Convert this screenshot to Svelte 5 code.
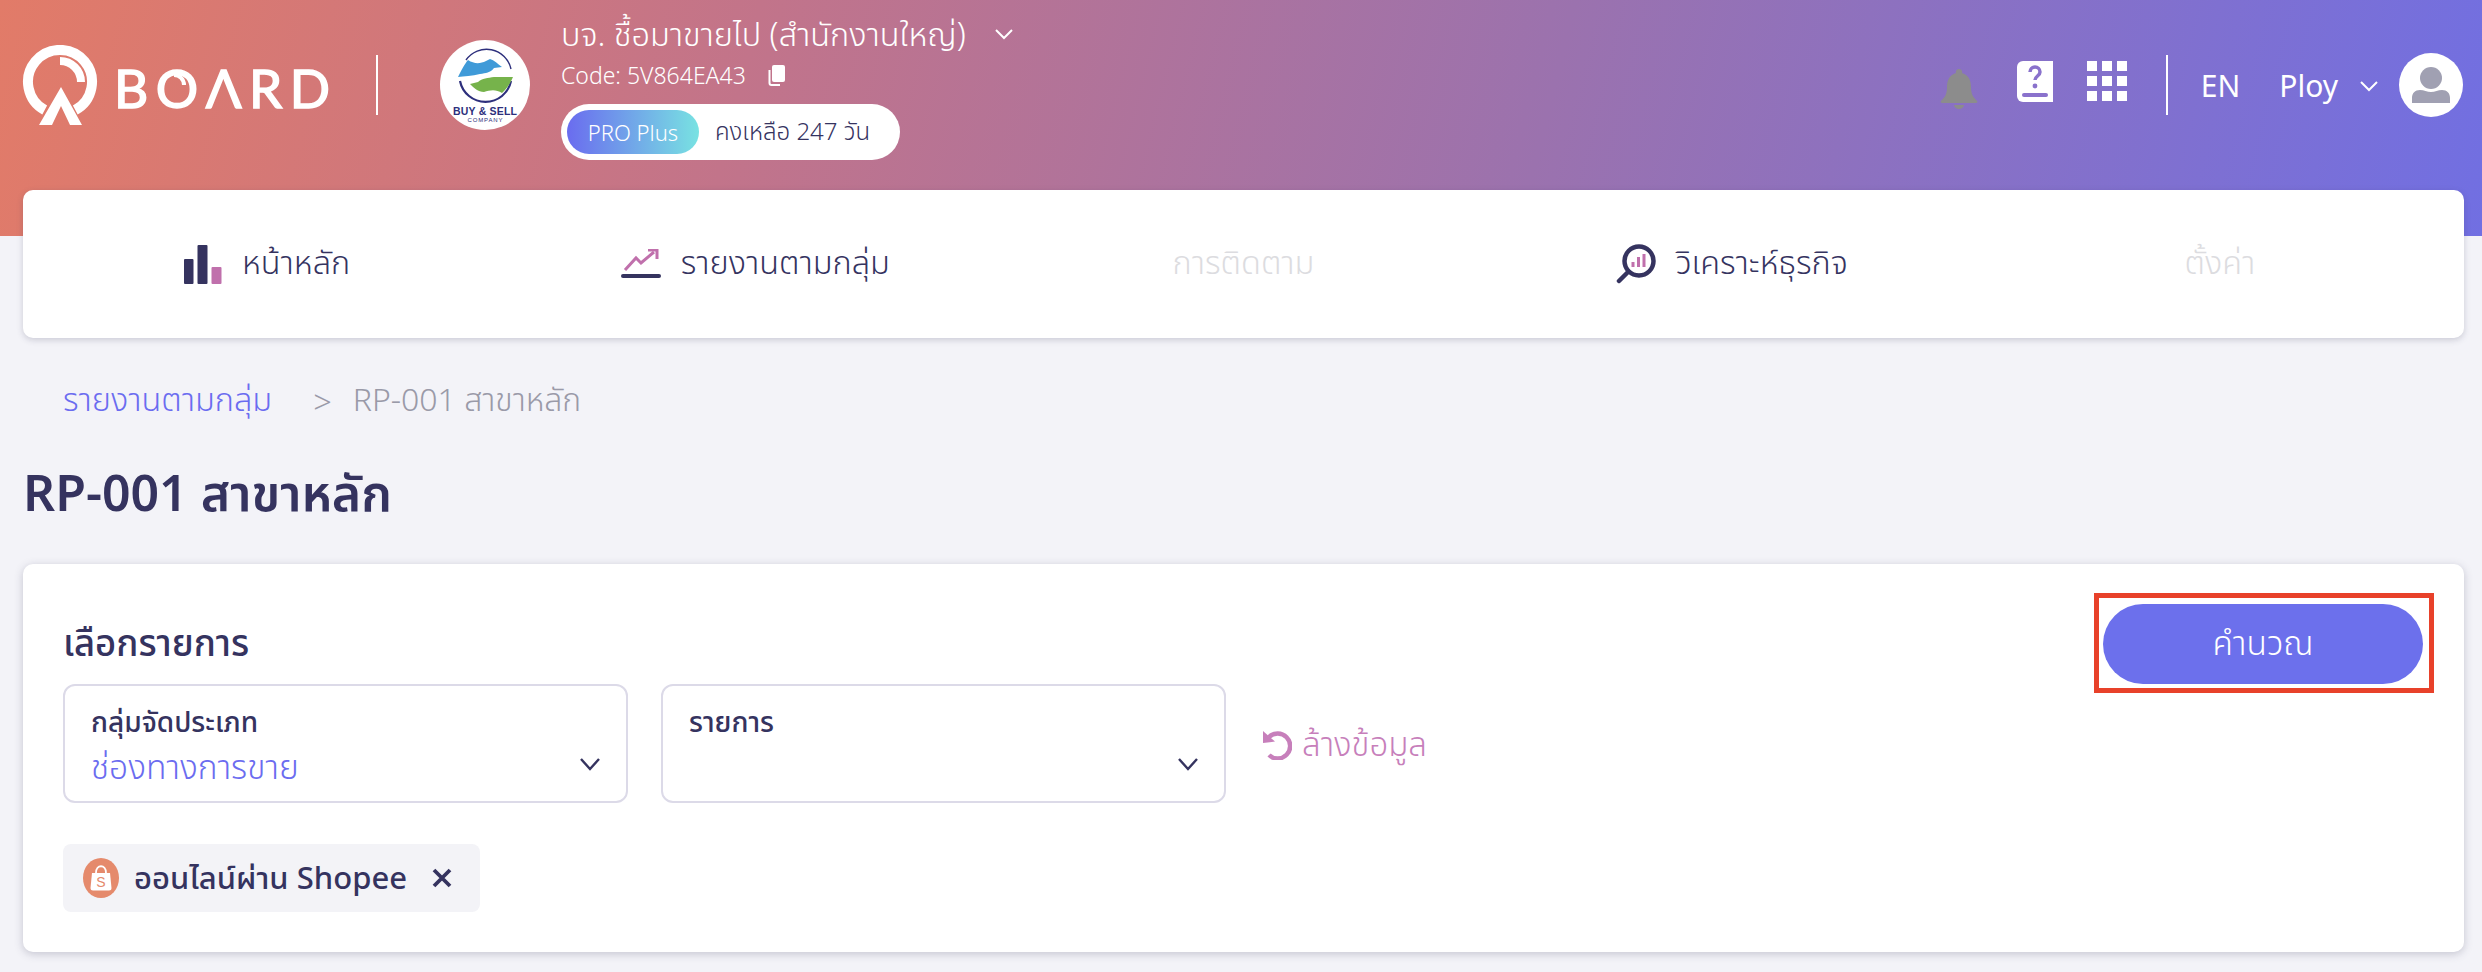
<script>
  const navItems = [
    { label: 'หน้าหลัก', icon: 'bars' },
    { label: 'รายงานตามกลุ่ม', icon: 'trend' },
    { label: 'การติดตาม', icon: '', off: true },
    { label: 'วิเคราะห์ธุรกิจ', icon: 'search' },
    { label: 'ตั้งค่า', icon: '', off: true }
  ];
</script>

<div class="page">
  <header class="top">
    <div class="brand">
      <svg class="mark" viewBox="0 0 80 84" width="80" height="84">
        <path d="M22.7 65 A32 32 0 1 1 53.3 65" fill="none" stroke="#fff" stroke-width="10" />
        <path d="M38 16 A21 21 0 0 1 59 37" fill="none" stroke="#fff" stroke-width="8" />
        <path d="M39 42 L60 80 H48 L39 61 L30 80 H17 Z" fill="#fff" />
      </svg>
      <span class="wordmark" aria-label="BOARD">BOΛRD</span>
      <svg class="glint" viewBox="0 0 13 13" width="13" height="13"><path d="M1 2 A10 10 0 0 1 11 12" fill="none" stroke="#fff" stroke-width="4" /></svg>
    </div>
    <span class="rule first"></span>
    <svg class="company" viewBox="0 0 90 90" width="90" height="90">
      <circle cx="45" cy="45" r="45" fill="#fff" />
      <path d="M26 20 A25 25 0 0 1 71 29" fill="none" stroke="#2d2f7c" stroke-width="1.4" />
      <path d="M20 41 A26 26 0 0 0 71 41" fill="none" stroke="#2d2f7c" stroke-width="2.2" />
      <path d="M18 37 C22 29 24 25 28 20 C34 24 40 24 46 21 L50 19 C54 20 58 24 62 27 L54 28 C50 33 46 33 40 34 C32 36 24 36 18 37 Z" fill="#3f9ad8" />
      <path d="M73 37 C70 44 66 50 62 53 C56 49 50 50 44 52 C38 52 34 48 30 44 L38 42 C42 38 48 38 54 37 C60 37 68 37 73 37 Z" fill="#76b34b" />
      <text x="45" y="74.5" class="co1" textLength="64">BUY &amp; SELL</text>
      <text x="45" y="81.5" class="co2" textLength="35">COMPANY</text>
    </svg>
    <div class="org">
      <div class="org-name">บจ. ชื้อมาขายไป (สำนักงานใหญ่)
        <svg class="chev-w" viewBox="0 0 20 12" width="20" height="12"><path d="M2 2l8 8 8-8" fill="none" stroke="#fff" stroke-width="2" /></svg>
      </div>
      <div class="org-code">Code: 5V864EA43
        <svg viewBox="0 0 24 24" width="24" height="24"><path d="M9 2h9a2 2 0 0 1 2 2v13a2 2 0 0 1-2 2H9a2 2 0 0 1-2-2V4a2 2 0 0 1 2-2z" fill="#fff" /><path d="M4.5 7v13a2 2 0 0 0 2 2H15" fill="none" stroke="#fff" stroke-width="2" /></svg>
      </div>
      <div class="plan"><span class="plan-tag">PRO Plus</span><span class="plan-left">คงเหลือ 247 วัน</span></div>
    </div>
    <div class="tools">
      <svg viewBox="0 0 38 40" width="38" height="40"><path d="M19 0a3 3 0 0 1 3 4c7 2 9 8 9 14 0 7 2 10 6 14 1 1 0 2-1 2H2c-1 0-2-1-1-2 4-4 6-7 6-14 0-6 2-12 9-14a3 3 0 0 1 3-4z M14 36h10a5 4 0 0 1-10 0z" fill="#8c8c8c" /></svg>
      <svg viewBox="0 0 36 41" width="36" height="41"><path d="M6 0h30v41H6a6 6 0 0 1-6-6V6a6 6 0 0 1 6-6z" fill="#fff" /><rect x="5" y="32" width="26" height="4" rx="2" fill="#8a72cc" /><path d="M13 11a5 5 0 0 1 10 0c0 4-5 4-5 8" fill="none" stroke="#8a72cc" stroke-width="3.5" /><circle cx="18" cy="25" r="2.4" fill="#8a72cc" /></svg>
      <div class="grid9">
        {#each Array(9) as _}<i></i>{/each}
      </div>
      <span class="rule second"></span>
      <span class="lang">EN</span>
      <span class="user">Ploy</span>
      <svg class="chev-u" viewBox="0 0 20 12" width="20" height="12"><path d="M2 2l8 8 8-8" fill="none" stroke="#fff" stroke-width="2" /></svg>
      <svg class="avatar" viewBox="0 0 64 64" width="64" height="64"><circle cx="32" cy="32" r="32" fill="#fff" /><ellipse cx="32" cy="25" rx="11" ry="11" fill="#a0a0b2" /><path d="M13 50v-5c0-5 3-8 8-8 4 0 7 2 11 2s7-2 11-2c5 0 8 3 8 8v5z" fill="#a0a0b2" /></svg>
    </div>
  </header>

  <nav class="nav">
    {#each navItems as item}
      <a class="nav-item" class:off={item.off}>
        {#if item.icon === 'bars'}
          <svg viewBox="0 0 38 39" width="38" height="39"><rect x="0" y="14" width="9.5" height="25" rx="1" fill="#35335f" /><rect x="13.5" y="0" width="10" height="39" rx="1" fill="#35335f" /><rect x="27.5" y="22" width="10" height="17" rx="1" fill="#c070ac" /></svg>
        {:else if item.icon === 'trend'}
          <svg viewBox="0 0 40 30" width="40" height="30"><rect x="0" y="25" width="40" height="4" rx="2" fill="#35335f" /><path d="M4 21 L15 9 L20 14 L33 3" fill="none" stroke="#c070ac" stroke-width="3" /><path d="M27 1 H36 V10" fill="none" stroke="#c070ac" stroke-width="3" /></svg>
        {:else if item.icon === 'search'}
          <svg viewBox="0 0 40 40" width="40" height="40"><circle cx="23" cy="17" r="14.5" fill="none" stroke="#35335f" stroke-width="4.5" /><path d="M12 28 L3 37" stroke="#35335f" stroke-width="4.5" stroke-linecap="round" /><path d="M17 18v5M22.5 13v10M28 10v13" stroke="#c070ac" stroke-width="3" /></svg>
        {/if}
        <span>{item.label}</span>
      </a>
    {/each}
  </nav>

  <div class="crumbs">
    <a class="crumb-link">รายงานตามกลุ่ม</a>
    <span class="crumb-sep">&gt;</span>
    <span class="crumb-here">RP-001 สาขาหลัก</span>
  </div>

  <h1 class="title">RP-001 สาขาหลัก</h1>

  <section class="card">
    <div class="card-head">
      <h2>เลือกรายการ</h2>
      <div class="btn-wrap">
        <button class="calc">คำนวณ</button>
        <span class="callout"></span>
      </div>
    </div>
    <div class="filters">
      <div class="select">
        <div class="sel-label">กลุ่มจัดประเภท</div>
        <div class="sel-value">ช่องทางการขาย</div>
        <svg class="sel-chev" viewBox="0 0 22 14" width="22" height="14"><path d="M2 2l9 10 9-10" fill="none" stroke="#35335f" stroke-width="2.4" /></svg>
      </div>
      <div class="select">
        <div class="sel-label">รายการ</div>
        <div class="sel-value"></div>
        <svg class="sel-chev" viewBox="0 0 22 14" width="22" height="14"><path d="M2 2l9 10 9-10" fill="none" stroke="#35335f" stroke-width="2.4" /></svg>
      </div>
      <div class="reset">
        <svg viewBox="0 0 30 29" width="30" height="29"><path d="M7 6 A12.5 12.5 0 1 1 7 24" fill="none" stroke="#c77fbb" stroke-width="4.5" /><path d="M1 0 L1 12 L13 10.5 Z" fill="#c77fbb" /></svg>
        <span>ล้างข้อมูล</span>
      </div>
    </div>
    <div class="chip">
      <svg viewBox="0 0 36 40" width="36" height="40"><ellipse cx="18" cy="20" rx="18" ry="20" fill="#e58a6c" /><path d="M9 15h18l1.500 15a2.500 2.500 0 0 1-2.500 2.500H10A2.500 2.500 0 0 1 7.500 30z" fill="#fff" /><path d="M13 15c0-9 10-9 10 0" fill="none" stroke="#fff" stroke-width="1.8" /><text x="18" y="29" class="s-mark">S</text></svg>
      <span>ออนไลน์ผ่าน Shopee</span>
      <svg class="chip-x" viewBox="0 0 20 20" width="20" height="20"><path d="M2 2l16 16M18 2L2 18" stroke="#35335f" stroke-width="3.8" /></svg>
    </div>
  </section>
</div>

<style>
  :global(body) {
    margin: 0;
    background: #f3f3f8;
  }
  .page {
    width: 2482px;
    height: 972px;
    overflow: hidden;
    font-family: "Noto Sans", "Noto Sans Thai", sans-serif;
    color: #35335f;
    background: #f3f3f8;
  }
  .top {
    height: 236px;
    box-sizing: border-box;
    padding: 0 19px 0 23px;
    display: flex;
    align-items: flex-start;
    background: linear-gradient(104deg, #e27b68 0%, #c2748a 30%, #9b72ae 62%, #716fe2 100%);
    color: #fff;
  }
  .brand {
    position: relative;
    display: flex;
    align-items: center;
    gap: 12px;
    margin-top: 45px;
    width: 306px;
  }
  .glint { position: absolute; left: 150px; top: 28px; }
  .mark { flex: none; margin-left: -1px; }
  .wordmark {
    font-family: Lato, sans-serif;
    font-size: 53px;
    line-height: 58px;
    letter-spacing: 7.5px;
    font-weight: 400;
    -webkit-text-stroke: 1.5px #fff;
    margin-top: 2px;
  }
  .rule {
    flex: none;
    width: 2px;
    height: 60px;
    margin-top: 55px;
    background: #fff;
  }
  .rule.first { margin-left: 47px; margin-right: 62px; }
  .rule.second { margin: 0 33px 0 39px; }
  .company { flex: none; margin-top: 40px; margin-right: 31px; }
  .co1 { font: 700 10.5px "Liberation Sans", sans-serif; fill: #2d2f7c; text-anchor: middle; }
  .co2 { font: 400 6px "Liberation Sans", sans-serif; fill: #2d2f7c; text-anchor: middle; }
  .org { padding-top: 14px; }
  .org-name {
    font-size: 32.5px;
    line-height: 40px;
    font-weight: 300;
    display: flex;
    align-items: center;
    white-space: pre;
  }
  .chev-w { margin-left: 20px; }
  .org-code {
    margin-top: 6px;
    font-size: 23px;
    line-height: 30px;
    font-weight: 300;
    display: flex;
    align-items: center;
    gap: 19px;
  }
  .plan {
    margin-top: 14px;
    width: 339px;
    height: 56px;
    box-sizing: border-box;
    padding: 6px;
    background: #fff;
    border-radius: 28px;
    display: flex;
    align-items: center;
    color: #35335f;
  }
  .plan-tag {
    width: 132px;
    height: 44px;
    border-radius: 22px;
    background: linear-gradient(90deg, #6a6cef, #78e2e2);
    color: #fff;
    font-size: 22px;
    line-height: 44px;
    font-weight: 300;
    text-align: center;
  }
  .plan-left {
    margin-left: 16px;
    font-size: 24px;
    font-weight: 300;
  }
  .tools {
    margin-left: auto;
    display: flex;
    align-items: center;
    height: 64px;
    margin-top: 53px;
    gap: 0;
  }
  .tools svg:nth-child(1) { margin-right: 39px; margin-top: 8px; }
  .tools svg:nth-child(2) { margin-right: 34px; margin-top: -8px; }
  .grid9 {
    display: grid;
    grid-template-columns: repeat(3, 10px);
    gap: 5px;
    margin-top: -8px;
  }
  .grid9 i { width: 10px; height: 10px; background: #fff; }
  .lang { font-size: 30px; font-weight: 400; }
  .user { font-size: 30px; font-weight: 400; margin-left: 39px; }
  .chev-u { margin: 2px 20px 0 21px; }
  .avatar { flex: none; }

  .nav {
    position: relative;
    margin: -46px 18px 0 23px;
    height: 148px;
    background: #fff;
    border-radius: 10px;
    box-shadow: 0 2px 6px rgba(60, 60, 90, 0.22);
    display: grid;
    grid-template-columns: repeat(5, 1fr);
  }
  .nav-item {
    display: flex;
    align-items: center;
    justify-content: center;
    gap: 20px;
    font-size: 32.5px;
    font-weight: 300;
    color: #35335f;
  }
  .nav-item.off { color: #dcdce0; }

  .crumbs {
    margin: 43px 0 0 63px;
    height: 40px;
    display: flex;
    align-items: center;
    font-size: 32.5px;
    font-weight: 300;
    color: #9a9aa8;
  }
  .crumb-link { color: #6b6cf0; }
  .crumb-sep { margin: 0 21px 0 41px; }
  .crumb-here { font-size: 32px; }
  .title {
    margin: 41px 0 0 23px;
    height: 60px;
    font-size: 50px;
    line-height: 60px;
    font-weight: 600;
  }
  .card {
    margin: 42px 18px 0 23px;
    height: 388px;
    box-sizing: border-box;
    padding: 40px 41px 40px 40px;
    background: #fff;
    border-radius: 10px;
    box-shadow: 0 2px 8px rgba(60, 60, 90, 0.25);
  }
  .card-head {
    display: flex;
    justify-content: space-between;
    align-items: flex-end;
    height: 80px;
  }
  .card-head h2 {
    margin: 0 0 20px;
    font-size: 36.5px;
    line-height: 44px;
    font-weight: 500;
  }
  .btn-wrap { position: relative; }
  .calc {
    display: block;
    width: 320px;
    height: 80px;
    border: 0;
    border-radius: 40px;
    background: #6c70ec;
    color: #fff;
    font: 300 33.5px "Noto Sans", "Noto Sans Thai", sans-serif;
  }
  .callout {
    position: absolute;
    top: -11px;
    right: -11px;
    bottom: -9px;
    left: -9px;
    border: 5px solid #e8412a;
  }
  .filters {
    display: flex;
    align-items: center;
    gap: 33px;
  }
  .select {
    position: relative;
    width: 565px;
    height: 119px;
    box-sizing: border-box;
    padding: 17px 26px;
    border: 2px solid #dcdae8;
    border-radius: 12px;
  }
  .sel-label {
    font-size: 28px;
    line-height: 36px;
    font-weight: 500;
  }
  .sel-value {
    margin-top: 7px;
    height: 40px;
    font-size: 33.5px;
    line-height: 40px;
    font-weight: 300;
    color: #6b6cf0;
  }
  .sel-chev {
    position: absolute;
    right: 25px;
    top: 71px;
  }
  .reset {
    display: flex;
    align-items: center;
    gap: 10px;
    margin-left: 3px;
    padding-top: 4px;
    font-size: 33px;
    font-weight: 300;
    color: #c77fbb;
  }
  .chip {
    margin-top: 41px;
    width: 417px;
    height: 68px;
    box-sizing: border-box;
    padding: 0 28px 0 20px;
    display: flex;
    align-items: center;
    background: #f3f3f7;
    border-radius: 8px;
    font-size: 31px;
    font-weight: 500;
  }
  .chip span { margin-left: 15px; padding-top: 2px; white-space: nowrap; }
  .chip-x { margin-left: auto; }
  .s-mark { font: 400 14px "Liberation Sans", sans-serif; fill: #e58a6c; text-anchor: middle; }
</style>
